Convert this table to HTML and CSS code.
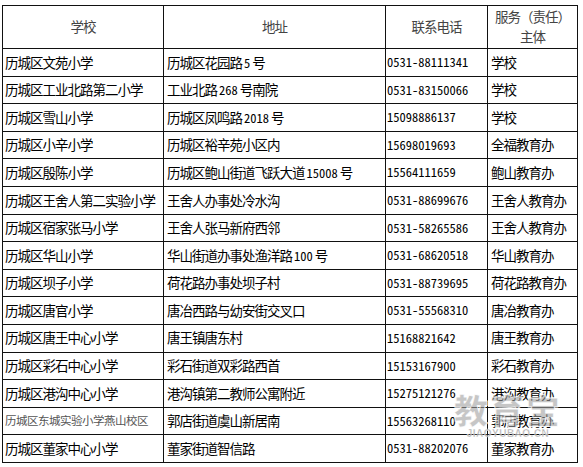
FILE: index.html
```html
<!DOCTYPE html>
<html lang="zh">
<head>
<meta charset="utf-8">
<link rel="stylesheet" href="styles.css">
</head>
<body>
<div class="page">
  <div class="grid">
    <div class="c h">学校</div>
    <div class="c h">地址</div>
    <div class="c h">联系电话</div>
    <div class="c h h4">服务（责任）<br>主体</div>

    <div class="c">历城区文苑小学</div><div class="c"><span>历城区花园路 <span class="n">5</span> 号</span></div><div class="c n">0531-88111341</div><div class="c">学校</div>
    <div class="c">历城区工业北路第二小学</div><div class="c"><span>工业北路 <span class="n">268</span> 号南院</span></div><div class="c n">0531-83150066</div><div class="c">学校</div>
    <div class="c">历城区雪山小学</div><div class="c"><span>历城区凤鸣路 <span class="n">2018</span> 号</span></div><div class="c n">15098886137</div><div class="c">学校</div>
    <div class="c">历城区小辛小学</div><div class="c">历城区裕辛苑小区内</div><div class="c n">15698019693</div><div class="c">全福教育办</div>
    <div class="c">历城区殷陈小学</div><div class="c"><span>历城区鲍山街道飞跃大道 <span class="n">15008</span> 号</span></div><div class="c n">15564111659</div><div class="c">鲍山教育办</div>
    <div class="c">历城区王舍人第二实验小学</div><div class="c">王舍人办事处冷水沟</div><div class="c n">0531-88699676</div><div class="c">王舍人教育办</div>
    <div class="c">历城区宿家张马小学</div><div class="c">王舍人张马新府西邻</div><div class="c n">0531-58265586</div><div class="c">王舍人教育办</div>
    <div class="c">历城区华山小学</div><div class="c"><span>华山街道办事处渔洋路 <span class="n">100</span> 号</span></div><div class="c n">0531-68620518</div><div class="c">华山教育办</div>
    <div class="c">历城区坝子小学</div><div class="c">荷花路办事处坝子村</div><div class="c n">0531-88739695</div><div class="c">荷花路教育办</div>
    <div class="c">历城区唐官小学</div><div class="c">唐冶西路与幼安街交叉口</div><div class="c n">0531-55568310</div><div class="c">唐冶教育办</div>
    <div class="c">历城区唐王中心小学</div><div class="c">唐王镇唐东村</div><div class="c n">15168821642</div><div class="c">唐王教育办</div>
    <div class="c">历城区彩石中心小学</div><div class="c">彩石街道双彩路西首</div><div class="c n">15153167900</div><div class="c">彩石教育办</div>
    <div class="c">历城区港沟中心小学</div><div class="c">港沟镇第二教师公寓附近</div><div class="c n">15275121276</div><div class="c">港沟教育办</div>
    <div class="c small">历城区东城实验小学燕山校区</div><div class="c">郭店街道虞山新居南</div><div class="c n">15563268110</div><div class="c">郭店教育办</div>
    <div class="c">历城区董家中心小学</div><div class="c">董家街道智信路</div><div class="c n">0531-88202076</div><div class="c">董家教育办</div>
  </div>
  <div class="wm">
    <div class="wm-big">教育宝</div>
    <div class="wm-small">JIAOYUBAO.CN</div>
  </div>
</div>
</body>
</html>
```

FILE: styles.css
```css
html, body {
  margin: 0;
  padding: 0;
  background: #fff;
}
.page {
  position: relative;
  width: 583px;
  height: 467px;
  padding: 5px 0 0 2px;
  box-sizing: border-box;
}
.grid {
  display: grid;
  grid-template-columns: 161px 222px 102px 90px;
  grid-template-rows: 43px repeat(15, 27.6px);
  border-left: 1px solid #111;
  border-top: 1px solid #111;
  width: 575px;
  font-family: "Noto Sans CJK SC", sans-serif;
  font-size: 13.5px;
  letter-spacing: -1px;
  color: #000;
}
.c {
  border-right: 1px solid #111;
  border-bottom: 1px solid #111;
  display: flex;
  align-items: center;
  padding-left: 2px;
  white-space: nowrap;
  line-height: 1;
  overflow: hidden;
}
.c:nth-child(4n+2) { padding-left: 3px; }
.c:nth-child(4n+3) { padding-left: 1px; }
.c:nth-child(4n+4) { padding-left: 3px; }
.h {
  justify-content: center;
  color: #444;
  padding-left: 0 !important;
  text-align: center;
}
.h4 {
  line-height: 20px;
  padding-bottom: 2px;
}
.n {
  font-size: 12.5px;
  letter-spacing: 0;
  font-feature-settings: "hwid" 1;
}
.small {
  font-size: 11.5px;
  letter-spacing: -0.5px;
  color: #555;
}
.wm {
  position: absolute;
  left: 452px;
  top: 391px;
  width: 112px;
  text-align: center;
  pointer-events: none;
}
.wm-big {
  font-family: "Noto Sans CJK SC", sans-serif;
  font-weight: 900;
  font-size: 34px;
  line-height: 38px;
  letter-spacing: 2px;
  color: rgba(160, 160, 160, 0.6);
  -webkit-text-stroke: 1px rgba(255, 255, 255, 0.85);
}
.wm-small {
  font-family: "Liberation Sans", sans-serif;
  font-weight: 700;
  font-size: 10px;
  line-height: 10px;
  letter-spacing: 0.5px;
  color: rgba(150, 150, 150, 0.8);
  -webkit-text-stroke: 0.4px rgba(255, 255, 255, 0.9);
}
```
